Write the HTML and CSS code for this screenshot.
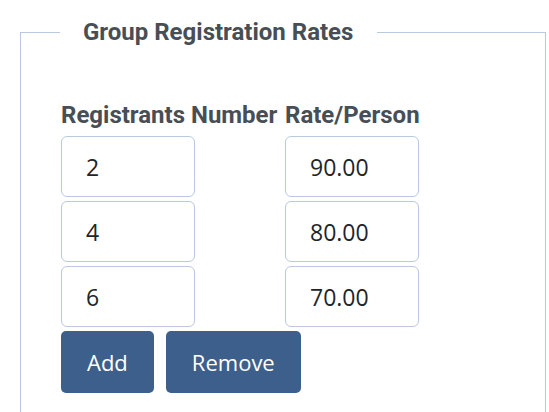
FILE: index.html
```html
<!doctype html>
<html lang="en">
  <head>
    <meta charset="UTF-8" />
    <meta name="viewport" content="width=device-width, initial-scale=1.0" />
    <title>Group Registration Rates</title>
    <link rel="stylesheet" href="styles.css">
  </head>
  <body>
    <fieldset class="rates">
      <legend>Group Registration Rates</legend>

      <div class="rates-grid">
        <div class="rates-head">Registrants Number</div>
        <div class="rates-head">Rate/Person</div>

        <input type="text" class="rate-input" value="2" />
        <input type="text" class="rate-input" value="90.00" />

        <input type="text" class="rate-input" value="4" />
        <input type="text" class="rate-input" value="80.00" />

        <input type="text" class="rate-input" value="6" />
        <input type="text" class="rate-input" value="70.00" />
      </div>

      <div class="rates-actions">
        <button type="button">Add</button>
        <button type="button">Remove</button>
      </div>
    </fieldset>
  </body>
</html>
```

FILE: styles.css
```css
body {
  margin: 0;
  padding: 20px 0 0 20px;
  background: white;
  font-family: Roboto, 'Liberation Sans', sans-serif;
}

.rates {
  width: 526px;
  box-sizing: border-box;
  margin: 0;
  padding: 0 0 40px 40px;
  border: 1px solid #b9c9df;
  min-height: 420px;
}

.rates legend {
  margin-left: -1px;
  padding: 0 24px 0 23px;
  font-size: 24px;
  font-weight: 700;
  line-height: 24px;
  color: #484e55;
}

.rates-grid {
  display: grid;
  grid-template-columns: 224px 134px;
  row-gap: 4px;
  margin-top: 57px;
}

.rates-head {
  font-size: 24px;
  font-weight: 700;
  line-height: 28px;
  color: #484e55;
  white-space: nowrap;
  margin-bottom: 3px;
}

.rate-input {
  width: 134px;
  height: 61px;
  box-sizing: border-box;
  margin: 0;
  padding: 0 24px;
  border: 1px solid #b9c9df;
  border-radius: 6px;
  font-family: 'Open Sans', sans-serif;
  font-size: 23px;
  color: #212529;
}

.rates-actions {
  display: flex;
  gap: 12px;
  margin-top: 4px;
}

.rates-actions button {
  height: 62px;
  padding: 0 26px;
  background: #3d5f8b;
  color: white;
  border: none;
  border-radius: 5px;
  font-family: 'Open Sans', sans-serif;
  font-size: 22px;
}
```
